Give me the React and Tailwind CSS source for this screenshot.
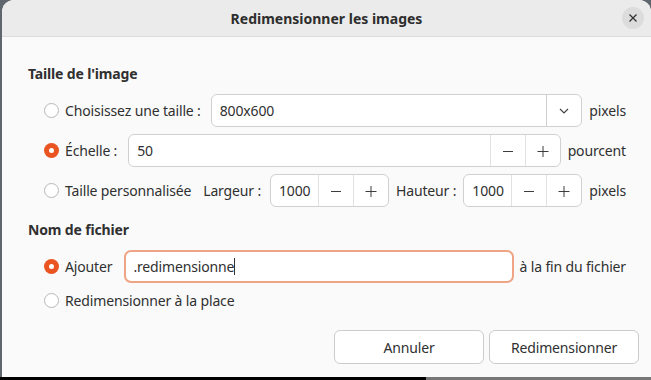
import React from 'react';

const Radio = ({ checked }) => (
    checked ? (
        <span className="w-[15px] h-[15px] rounded-full bg-[#e95420] flex items-center justify-center shrink-0">
            <span className="w-[5px] h-[5px] rounded-full bg-white" />
        </span>
    ) : (
        <span className="w-[15px] h-[15px] rounded-full border border-[#b8b8b8] bg-white shrink-0" />
    )
);

const Minus = () => (
    <svg width="12" height="12" viewBox="0 0 12 12"><path d="M1 6.5h10" stroke="#3d3d3d" strokeWidth="1" /></svg>
);

const Plus = () => (
    <svg width="12" height="12" viewBox="0 0 12 12"><path d="M0.5 6.5h11M6 1v11" stroke="#3d3d3d" strokeWidth="1" /></svg>
);

const SpinButtons = () => (
    <>
        <span className="w-[35px] h-full border-l border-[#e2e2e2] flex items-center justify-center"><Minus /></span>
        <span className="w-[35px] h-full border-l border-[#e2e2e2] flex items-center justify-center"><Plus /></span>
    </>
);

const Spin = ({ value }) => (
    <div className="w-[119px] h-[33px] flex items-center bg-white border border-[#d0d0d0] rounded-[6px]">
        <span className="flex-1 pl-[8px]">{value}</span>
        <SpinButtons />
    </div>
);

export default function App() {
    return (
        <div className="w-[651px] h-[380px] bg-[#5f666e] flex flex-col" style={{ fontFamily: '"Noto Sans", sans-serif' }}>
            <div className="ml-[2px] flex-1 flex flex-col bg-[#fafafa] rounded-t-[12px] overflow-hidden text-[14px] text-[#303030] tracking-[-0.15px]">
                {/* titlebar */}
                <div className="h-[37px] shrink-0 bg-[#ebebeb] border-b border-[#dadada] flex items-center justify-center relative">
                    <span className="font-bold text-[14px] text-[#2e2e2e] tracking-normal">Redimensionner les images</span>
                    <span className="absolute right-[7px] top-[7px] w-[22px] h-[22px] rounded-full bg-[#dcdcdc] flex items-center justify-center">
                        <svg width="10" height="10" viewBox="0 0 10 10"><path d="M1.5 1.5l7 7M8.5 1.5l-7 7" stroke="#333" strokeWidth="1.3" /></svg>
                    </span>
                </div>

                <div className="flex flex-col pl-[26px] pr-[25px]">
                    <div className="mt-[26px] h-[20px] flex items-center font-bold">Taille de l'image</div>

                    <div className="pl-[16px] mt-[11px] flex flex-col gap-[7px]">
                        <div className="h-[33px] flex items-center">
                            <Radio />
                            <span className="ml-[6px]">Choisissez une taille :</span>
                            <div className="ml-[10px] flex-1 h-[33px] flex items-center bg-white border border-[#d0d0d0] rounded-[6px]">
                                <span className="flex-1 pl-[8px]">800x600</span>
                                <span className="w-[35px] h-full border-l border-[#d0d0d0] flex items-center justify-center">
                                    <svg width="10" height="6" viewBox="0 0 10 6"><path d="M1 1l4 4 4-4" fill="none" stroke="#444" strokeWidth="1.2" /></svg>
                                </span>
                            </div>
                            <span className="ml-[7px]">pixels</span>
                        </div>

                        <div className="h-[33px] flex items-center">
                            <Radio checked />
                            <span className="ml-[6px]">Échelle :</span>
                            <div className="ml-[11px] flex-1 h-[33px] flex items-center bg-white border border-[#d0d0d0] rounded-[6px]">
                                <span className="flex-1 pl-[8px]">50</span>
                                <SpinButtons />
                            </div>
                            <span className="ml-[7px]">pourcent</span>
                        </div>

                        <div className="h-[33px] flex items-center">
                            <Radio />
                            <span className="ml-[6px]">Taille personnalisée</span>
                            <span className="ml-[12px] flex-1">Largeur :</span>
                            <Spin value="1000" />
                            <span className="ml-[7px] mr-[7px]">Hauteur :</span>
                            <Spin value="1000" />
                            <span className="ml-[7px]">pixels</span>
                        </div>
                    </div>

                    <div className="mt-[12px] h-[20px] flex items-center font-bold">Nom de fichier</div>

                    <div className="pl-[16px] mt-[11px] flex flex-col">
                        <div className="h-[33px] flex items-center">
                            <Radio checked />
                            <span className="ml-[6px]">Ajouter</span>
                            <div className="ml-[12px] flex-1 h-[33px] flex items-center bg-white border-2 border-[#f0a486] rounded-[7px]">
                                <span className="pl-[7px]">.redimensionne</span>
                                <span className="w-px h-[17px] bg-[#333]" />
                            </div>
                            <span className="ml-[6px]">à la fin du fichier</span>
                        </div>
                        <div className="h-[34px] flex items-center">
                            <Radio />
                            <span className="ml-[6px]">Redimensionner à la place</span>
                        </div>
                    </div>
                </div>

                <div className="mt-auto mb-[13px] pr-[12px] flex justify-end gap-[5px]">
                    <span className="w-[150px] h-[34px] bg-white border border-[#cccccc] rounded-[6px] flex items-center justify-center">Annuler</span>
                    <span className="w-[150px] h-[34px] bg-white border border-[#cccccc] rounded-[6px] flex items-center justify-center">Redimensionner</span>
                </div>
            </div>
            <div className="h-[3px] flex">
                <div className="w-[426px] bg-black" />
                <div className="flex-1 bg-[#777]" />
            </div>
        </div>
    );
}
